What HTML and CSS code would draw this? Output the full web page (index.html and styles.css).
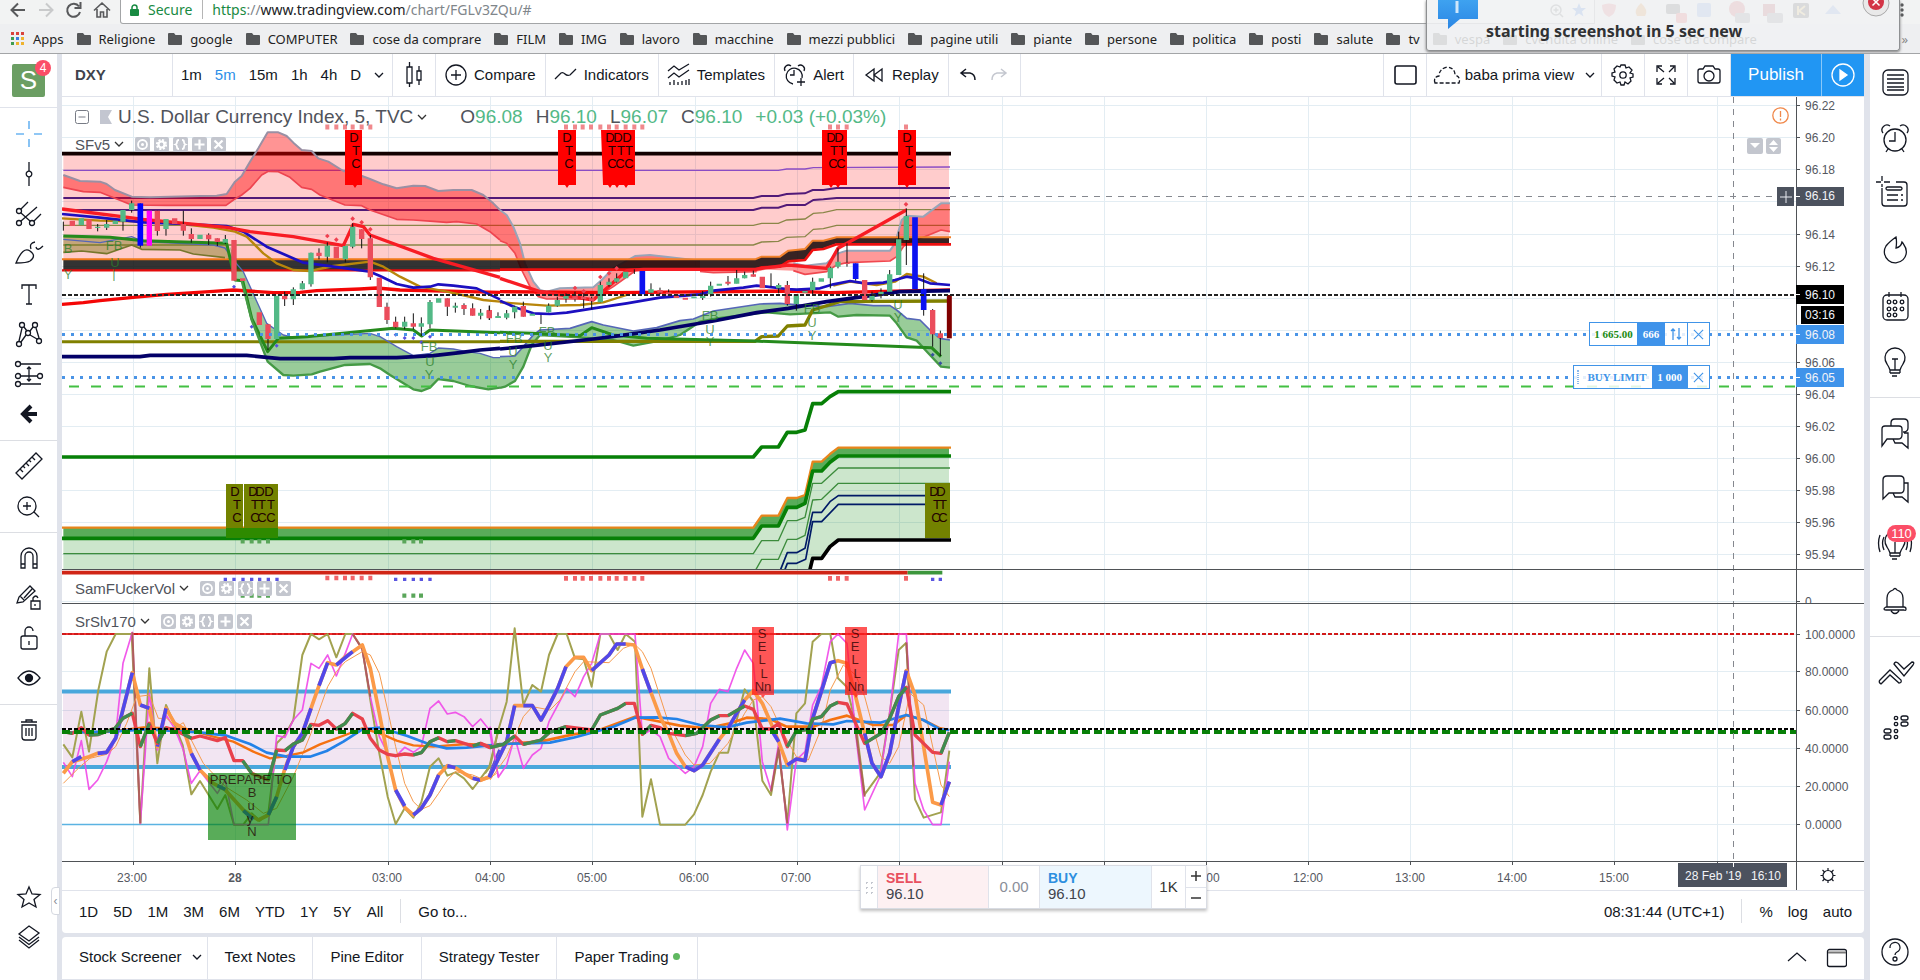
FILE: index.html
```html
<!DOCTYPE html>
<html lang="en">
<head>
<meta charset="utf-8">
<title>DXY 96.10 — TradingView</title>
<link rel="stylesheet" href="styles.css">
</head>
<body>
<svg class="defs" aria-hidden="true">
  <symbol id="folder" viewBox="0 0 14 12"><path d="M1 0h5l1.500 2H13q1 0 1 1v8q0 1-1 1H1q-1 0-1-1V1q0-1 1-1z" fill="#545658"/></symbol>
  <symbol id="chev" viewBox="0 0 10 6"><path d="M1 1l4 4 4-4" fill="none" stroke="currentColor" stroke-width="1.300"/></symbol>
  <symbol id="m-eye" viewBox="0 0 15 15"><rect width="15" height="15" rx="2" fill="#c3c6ce"/><circle cx="7.500" cy="7.500" r="4.500" fill="none" stroke="#fff" stroke-width="1.800"/><circle cx="7.500" cy="7.500" r="1.500" fill="#fff"/></symbol>
  <symbol id="m-gear" viewBox="0 0 15 15"><rect width="15" height="15" rx="2" fill="#c3c6ce"/><circle cx="7.500" cy="7.500" r="4.500" fill="none" stroke="#fff" stroke-width="2.200" stroke-dasharray="2 1.530"/><circle cx="7.500" cy="7.500" r="3" fill="none" stroke="#fff" stroke-width="2.200"/></symbol>
  <symbol id="m-code" viewBox="0 0 15 15"><rect width="15" height="15" rx="2" fill="#c3c6ce"/><path d="M6 3Q4 3 4 5t-1.500 2.500Q4 8 4 10t2 2M9 3q2 0 2 2t1.500 2.500Q11 8 11 10t-2 2" fill="none" stroke="#fff" stroke-width="1.800"/></symbol>
  <symbol id="m-plus" viewBox="0 0 15 15"><rect width="15" height="15" rx="2" fill="#c3c6ce"/><path d="M7.500 2.500v10M2.500 7.500h10" stroke="#fff" stroke-width="2.200"/></symbol>
  <symbol id="m-x" viewBox="0 0 15 15"><rect width="15" height="15" rx="2" fill="#c3c6ce"/><path d="M3.500 3.500l8 8M11.500 3.500l-8 8" stroke="#fff" stroke-width="2.200"/></symbol>
  <symbol id="cross" viewBox="0 0 12 12"><path d="M1 1l10 10M11 1L1 11" stroke="#4094e8" stroke-width="1.200"/></symbol>
</svg>

<header class="browser">
  <div class="navbar">
    <svg class="nav-icons" width="120" height="24" fill="none" stroke="#58595b" stroke-width="2">
      <path d="M25 10H12M18 3.500L11.500 10l6.500 6.500"/><path d="M39 10h13M46 3.500l6.500 6.500-6.500 6.500" stroke="#c9cacb"/><path d="M79 6.500A6.500 6.500 0 1 0 80 12M80.500 2v6h-6"/><path d="M94 10.500l8-7.500 8 7.500M97 9v8h3.500v-5h3v5h3.500V9" stroke-width="1.600"/>
    </svg>
    <div class="omnibox">
      <svg width="9" height="12" fill="#188a42"><rect y="5" width="9" height="7" rx="1"/><path d="M2 5V3.500a2.500 2.500 0 0 1 5 0V5" fill="none" stroke="#188a42" stroke-width="1.500"/></svg>
      <span class="secure">Secure</span><span class="url"><span class="scheme">https</span>://<b>www.tradingview.com</b>/chart/FGLv3ZQu/#</span>
      <span class="grow"></span>
      <svg width="42" height="16" fill="none" stroke="#6b6d70" stroke-width="1.500"><circle cx="8" cy="8" r="5"/><path d="M12 12l3 3M5.500 8h5M8 5.500v5"/><path d="M31 1l2 5h5l-4 3.500 1.500 5L31 11.500 26.500 14.500l1.500-5L24 6h5z" fill="#4a86e8" stroke="none"/></svg>
    </div>
    <svg class="ext-icons" width="325" height="24">
      <path d="M7 5q7-3 14 0 0 9-7 12-7-3-7-12z" fill="#e5737a"/><path d="M46 3q8 7 4 13h-8q-4-6 4-13z" fill="#e8903a"/><rect x="71" y="4" width="14" height="10" rx="2" fill="#555"/><rect x="81" y="13" width="11" height="10" rx="2" fill="#e55"/><rect x="102" y="3" width="14" height="14" rx="2" fill="#7ba2e2"/><circle cx="142" cy="9" r="8" fill="#d4555b"/><rect x="140" y="13" width="15" height="10" rx="2" fill="#8d8e90"/><path d="M168 4h12v12h-12z" fill="#b5454c"/><rect x="172" y="13" width="16" height="10" rx="2" fill="#8d8e90"/><rect x="198" y="3" width="16" height="15" rx="2" fill="#444"/><path d="M203 6v9M210 6l-6 5 6 4" fill="none" stroke="#eec86a" stroke-width="2"/><path d="M230 14l8-9 8 9z" fill="#7ba2e2"/>
      <g fill="#58595b"><circle cx="307" cy="5" r="1.700"/><circle cx="307" cy="10" r="1.700"/><circle cx="307" cy="15" r="1.700"/></g>
    </svg>
  </div>
  <nav class="bookmarks">
    <a href="#"><svg width="14" height="13"><path d="M0 0h3v3H0zM5 0h3v3H5zM10 0h3v3h-3z" fill="#d9433c"/><path d="M0 5h3v3H0z" fill="#3f9c4f"/><path d="M5 5h3v3H5z" fill="#3b7de0"/><path d="M10 5h3v3h-3zM5 10h3v3H5zM10 10h3v3h-3z" fill="#eeb32e"/><path d="M0 10h3v3H0z" fill="#3f9c4f"/></svg>Apps</a>
    <a href="#"><svg width="14" height="12"><use href="#folder"/></svg>Religione</a>
    <a href="#"><svg width="14" height="12"><use href="#folder"/></svg>google</a>
    <a href="#"><svg width="14" height="12"><use href="#folder"/></svg>COMPUTER</a>
    <a href="#"><svg width="14" height="12"><use href="#folder"/></svg>cose da comprare</a>
    <a href="#"><svg width="14" height="12"><use href="#folder"/></svg>FILM</a>
    <a href="#"><svg width="14" height="12"><use href="#folder"/></svg>IMG</a>
    <a href="#"><svg width="14" height="12"><use href="#folder"/></svg>lavoro</a>
    <a href="#"><svg width="14" height="12"><use href="#folder"/></svg>macchine</a>
    <a href="#"><svg width="14" height="12"><use href="#folder"/></svg>mezzi pubblici</a>
    <a href="#"><svg width="14" height="12"><use href="#folder"/></svg>pagine utili</a>
    <a href="#"><svg width="14" height="12"><use href="#folder"/></svg>piante</a>
    <a href="#"><svg width="14" height="12"><use href="#folder"/></svg>persone</a>
    <a href="#"><svg width="14" height="12"><use href="#folder"/></svg>politica</a>
    <a href="#"><svg width="14" height="12"><use href="#folder"/></svg>posti</a>
    <a href="#"><svg width="14" height="12"><use href="#folder"/></svg>salute</a>
    <a href="#"><svg width="14" height="12"><use href="#folder"/></svg>tv</a>
    <a href="#"><svg width="14" height="12"><use href="#folder"/></svg>vespa</a>
    <a href="#"><svg width="14" height="12"><use href="#folder"/></svg>cvendita online</a>
    <a href="#"><svg width="14" height="12"><use href="#folder"/></svg>cose da compare</a>
    <span class="more">»</span>
  </nav>
  <div class="toast" role="status">
    <svg class="bubble" width="40" height="30"><defs><linearGradient id="bg" x2="0" y2="1"><stop stop-color="#3ea2f0"/><stop offset="1" stop-color="#2b86e4"/></linearGradient></defs><path d="M0 0h40v19H22L10 29V19H0z" fill="url(#bg)"/><path d="M19 1v12" stroke="#cfe7fb" stroke-width="3"/></svg>
    <span>starting screenshot in 5 sec new</span>
    <svg class="close" width="28" height="18"><circle cx="14" cy="3" r="13" fill="#e9e9e9" stroke="#a9a9a9"/><circle cx="14" cy="2" r="8" fill="#d33446"/><path d="M10.500-1.500l7 7M17.500-1.500l-7 7" stroke="#fff" stroke-width="1.500"/></svg>
  </div>
</header>

<div class="app">
  <aside class="drawbar">
    <div class="logo"><span class="avatar">S</span><span class="badge">4</span></div>
    <button aria-label="Cross"><svg viewBox="-14 -14 28 28" stroke="#6cb5f2" stroke-width="1.600"><path d="M0-13v8M0 5v8M-13 0h8M5 0h8"/></svg></button>
    <button aria-label="Trend line"><svg viewBox="-14 -14 28 28"><path d="M0-12v9M0 3v9"/><circle r="2.800"/></svg></button>
    <button aria-label="Pitchfork"><svg viewBox="-14 -14 28 28"><circle cx="-10" cy="-3" r="2.500"/><circle cx="-10" cy="9" r="2.500"/><circle cx="3" cy="9" r="2.500"/><path d="M-8-5l7-7M-8-1L1 7M-8 7L8-7M5 7l7-7"/></svg></button>
    <button aria-label="Brush"><svg viewBox="-14 -14 28 28"><path d="M-13 9Q-6-8 1-3 8 2 1 7-2 9-13 9zM2-5q-2-6 4-7M7-7q1 5 7-1"/></svg></button>
    <button aria-label="Text"><svg viewBox="-14 -14 28 28"><path d="M-7-5v-4H7v4M0-9V10M-3 10h6"/></svg></button>
    <button aria-label="Patterns"><svg viewBox="-14 -14 28 28"><circle cx="-7" cy="-9" r="2.500"/><circle cx="6" cy="-9" r="2.500"/><circle cx="-1" cy="-1" r="2.500"/><circle cx="-10" cy="10" r="2.500"/><circle cx="10" cy="7" r="2.500"/><path d="M-5-7l3 4M4-7L1-3M-7-6l-3 13M7-6l3 10M-8 8l5-7M8 5L1 1"/></svg></button>
    <button aria-label="Prediction"><svg viewBox="-14 -14 28 28"><circle cx="-11" cy="-10" r="2.500"/><circle cx="-11" cy="2" r="2.500"/><circle cx="11" cy="2" r="2.500"/><circle cx="-11" cy="10" r="2.500"/><path d="M-8-10h20M-8 2H8M-8 10h20M0-7V7M-2-5l2-2 2 2M-2 5l2 2 2-2"/></svg></button>
    <button aria-label="Arrow"><svg viewBox="-14 -14 28 28" stroke-width="4"><path d="M8 0H-5M2-8l-8 8 8 8"/></svg></button>
    <hr>
    <button aria-label="Measure"><svg viewBox="-14 -14 28 28"><path d="M-13 7L7-13l6 6L-7 13zM-9 3l3 3M-6 0l2 2M-3-3l3 3M0-6l2 2M3-9l3 3"/></svg></button>
    <button aria-label="Zoom"><svg viewBox="-14 -14 28 28"><circle cx="-2" r="9"/><path d="M5 6l5 5M-6 0h8M-2-4v8"/></svg></button>
    <hr>
    <button aria-label="Magnet"><svg viewBox="-14 -14 28 28"><path d="M-8 10V-2a8 8 0 0 1 16 0v12H4V-2a4 4 0 0 0-8 0v12zM-8 6h4M4 6h4"/></svg></button>
    <button aria-label="Stay in drawing mode"><svg viewBox="-14 -14 28 28"><path d="M-12 5l2-6L1-12l5 5L-6 4zM-9-2l4 4M2 3h9v8H2zM4 3V0q3-4 5 0M6 6v2M-5 0L3-9"/></svg></button>
    <button aria-label="Lock"><svg viewBox="-14 -14 28 28"><rect x="-8" y="-2" width="16" height="13" rx="2"/><path d="M-4-2v-5a4 4 0 0 1 8 0M0 3v4"/></svg></button>
    <button aria-label="Hide drawings"><svg viewBox="-14 -14 28 28"><path d="M-11 0q11-14 22 0-11 14-22 0z"/><circle r="3.500" fill="#131722"/></svg></button>
    <hr>
    <button aria-label="Remove"><svg viewBox="-14 -14 28 28"><path d="M-8-8H8M-3-8v-2h6v2M-7-5V7q0 3 3 3h8q3 0 3-3V-5zM-3-2v8M0-2v8M3-2v8"/></svg></button>
    <div class="bar-end">
      <button aria-label="Favorites"><svg viewBox="-14 -14 28 28"><path d="M0-10l3 7 8 .500-6 5 2 7.500-7-4-7 4 2-7.500-6-5 8-.500z"/></svg></button>
      <button aria-label="Object tree"><svg viewBox="-14 -14 28 28"><path d="M0-11l10 7L0 4l-10-7zM-10 0L0 7.500 10 0M-10 3L0 11 10 3"/></svg></button>
    </div>
    <button class="handle" aria-label="Hide toolbar">‹</button>
  </aside>

  <main class="center">
    <div class="topbar">
      <button class="symbol">DXY</button>
      <div class="times"><button>1m</button><button class="on">5m</button><button>15m</button><button>1h</button><button>4h</button><button>D</button><button aria-label="Intervals"><svg width="10" height="6"><use href="#chev"/></svg></button></div>
      <button class="sq" aria-label="Candles"><svg viewBox="-14 -14 28 28"><path d="M-7-8h5V8h-5zM-4.500-13v5M-4.500 8v4M3-4h4V5H3zM5-9v5M5 5v5"/></svg></button>
      <button class="wide"><svg viewBox="-11 -11 22 22"><circle r="10"/><path d="M-5 0H5M0-5V5"/></svg>Compare</button>
      <button class="wide"><svg viewBox="-11 -11 22 22"><path d="M-11 4l6-6q2-1 4 1t5 1l6-6"/></svg>Indicators</button>
      <button class="wide"><svg viewBox="-11 -11 22 22"><path d="M-11-4l6-5 5 4 10-6M-11 3l6-5 5 4 10-7M-9 7v3M-5 5v5M-1 7v3M3 6v4M7 5v5M10 4v6"/></svg>Templates</button>
      <button class="wide"><svg viewBox="-11 -11 22 22"><path d="M-2 9A8 8 0 1 1 7 3M-1-5v5h-4M-10-4a4 4 0 0 1 6-5M3-9a4 4 0 0 1 6 5M6 3v8M2 7h8"/></svg>Alert</button>
      <button class="wide"><svg viewBox="-11 -11 22 22"><path d="M0-6v12l-8-6zM8-6v12L0 0z"/></svg>Replay</button>
      <div class="undo"><button aria-label="Undo"><svg viewBox="-11 -11 22 22"><path d="M-2-6l-5 4 5 4M-7-2H2q5 1 5 7" stroke-width="1.500"/></svg></button><button aria-label="Redo"><svg viewBox="-11 -11 22 22" stroke="#c4c7cf"><path d="M2-6l5 4-5 4M7-2H-2q-5 1-5 7" stroke-width="1.500"/></svg></button></div>
      <span class="grow"></span>
      <button class="sq lead" aria-label="Layout"><svg viewBox="-14 -14 28 28"><rect x="-10" y="-9" width="21" height="18" rx="2" stroke-width="1.600"/></svg></button>
      <button class="view"><svg viewBox="-14 -14 28 28"><path d="M-12 8q-2-6 4-7 0-7 8-9 8 1 8 8 6 2 4 8z" stroke-dasharray="4 2"/></svg>baba prima view<svg class="dn"><use href="#chev"/></svg></button>
      <button class="sq" aria-label="Settings"><svg viewBox="-14 -14 28 28"><circle r="3.200"/><path d="M-2-10h4l1 3 3-1 3 3-2 3 3 1v3l-3 1 1 3-3 3-3-2-1 3h-3l-1-3-3 1-3-3 1-3-3-1v-3l3-1-1-3 3-3 3 1z"/></svg></button>
      <button class="sq" aria-label="Fullscreen"><svg viewBox="-14 -14 28 28"><path d="M-9-3v-6h5M-8-8l6 5M9-3v-6H4M8-8L3-3M-9 3v6h5M-8 8l6-5M9 3v6H4M8 8L3 3"/></svg></button>
      <button class="sq" aria-label="Snapshot"><svg viewBox="-14 -14 28 28"><path d="M-9-6h3l2-3h8l2 3h3q2 0 2 2V6q0 2-2 2H-9q-2 0-2-2V-4q0-2 2-2z"/><circle cy="1" r="5"/></svg></button>
      <button class="publish">Publish</button>
      <button class="play" aria-label="Play"><svg viewBox="-14 -14 28 28" stroke="#fff"><circle r="11"/><path d="M-3-5l7 5-7 5z" fill="#fff"/></svg></button>
    </div>

    <div class="chart">
      <div class="plot">
        <svg class="canvas"><g transform="translate(-62 -97)">
          <path class="grid" d="M62 105.500h3000M62 137.500h3000M62 169.500h3000M62 201.500h3000M62 234.500h3000M62 266.500h3000M62 298.500h3000M62 330.500h3000M62 362.500h3000M62 394.500h3000M62 426.500h3000M62 458.500h3000M62 490.500h3000M62 522.500h3000M62 554.500h3000M62 601.500h3000M62 634.500h3000M62 671.500h3000M62 710.500h3000M62 748.500h3000M62 786.500h3000M62 824.500h3000"/>
          <path class="grid" d="M133.500 97v764M235.500 97v764M388.500 97v764M490.500 97v764M592.500 97v764M695.500 97v764M797.500 97v764M899.500 97v764M1002.500 97v764M1104.500 97v764M1206.500 97v764M1308.500 97v764M1410.500 97v764M1512.500 97v764M1614.500 97v764M1717.500 97v764"/>

          <g transform="translate(480 100) scale(.33333)" fill="none">
            <path d="M-1250 165H1407V412H1070l-40 10h-32l-23 25-50 5-25 18h-55l-20 8H-1250z" fill="#f00" fill-opacity=".2"/>
            <path d="M-1250 211H895l25-4h55l25-4 410-2" stroke="#8a4cc4" stroke-width="4"/>
            <path d="M-1250 294H820l25-6h50l25-6 55-2 23-10h32l40-6h340M-1250 330H820l25-7h50l25-8h55l25-15 30-2 40-4h340" stroke="#511a78" stroke-width="6"/>
            <path d="M-1250 376H820l25-6h50l25-10 55-3 25-17 30-2 40-9h340M-1250 435H820l25-9 50-2 25-12 55-2 25-22 30-2 40-10h340" stroke="#8b8648" stroke-width="4"/>
            <path d="M-1254 161H1413" stroke="#120000" stroke-width="11"/>
          </g>

          <g transform="translate(0 90) scale(.33333)" fill="none" stroke-linejoin="round">
            <path d="M190 255L240 273 300 275 320 282 345 300 395 320 450 322 600 318 650 317 680 312 705 275 725 258 750 215 775 175 803 127 835 127 860 138 880 158 905 180 935 183 955 205 985 215 1030 243 1070 252 1110 267 1150 283 1190 295 1240 287 1275 288 1315 303 1360 300 1415 300 1450 315 1480 340 1500 360V450L1470 425 1430 402 1370 395 1340 397 1300 394 1240 390 1190 388 1110 360 1085 347 1035 345 960 315 935 298 905 292 870 262 835 245 805 244 785 255 750 295 725 315 700 330 678 346 500 346 395 345 345 325 300 307 250 305 190 292z" fill="#f00" fill-opacity=".42"/>
            <path d="M190 255L240 273 300 275 320 282 345 300 395 320 450 322 600 318 650 317 680 312 705 275 725 258 750 215 775 175 803 127 835 127 860 138 880 158 905 180 935 183 955 205 985 215 1030 243 1070 252 1110 267 1150 283 1190 295 1240 287 1275 288 1315 303 1360 300 1415 300 1450 315 1480 340 1500 360" stroke="#9a90a4" stroke-width="6"/>
            <path d="M190 292L250 305 300 307 345 325 395 345 500 346 678 346 700 330 725 315 750 295 785 255 805 244 835 245 870 262 905 292 935 298 960 315 1035 345 1085 347 1110 360 1190 388 1240 390 1300 394 1340 397 1370 395 1430 402 1470 425 1500 450" stroke="#ee4450" stroke-width="5"/>
            <path d="M190 508H1500V541H190z" fill="#000" fill-opacity=".8"/><path d="M186 508H1500" stroke="#f07818" stroke-width="6"/><path d="M186 541H1500" stroke="#e50b0b" stroke-width="7"/>
            <path d="M190 438L330 442 380 445 430 452 680 460 700 510 675 503 580 492 540 480 425 478 395 465 320 491 245 483 190 487z" fill="#6b6b00" fill-opacity=".4"/>
            <path d="M690 470L730 545 800 700 850 735 880 742 1110 730 1140 740 1190 770 1240 797 1290 790 1315 774 1360 777 1400 785 1440 790 1480 803 1500 803V893L1465 898 1410 888 1360 873 1315 867 1290 893 1265 903 1240 898 1170 855 1140 835 1110 822 1035 825 960 845 935 853 880 857 850 855 803 815 755 685 725 572 705 570z" fill="#008000" fill-opacity=".4"/>
            <path d="M186 755H1500" stroke="#808000" stroke-width="9"/>
            <path d="M190 448L300 458 395 440 430 455 640 465 675 474 700 510 730 545 800 700 850 735 880 742 1110 730 1140 740 1190 770 1240 797 1290 790 1315 774 1360 777 1400 785 1440 790 1480 803 1500 803" stroke="#5566b8" stroke-width="4"/>
            <path d="M186 643L250 638 300 632 400 622 500 613 640 604 700 600 820 608 900 607 950 602 1080 597 1130 594 1200 600 1500 607" stroke="#f40606" stroke-width="10"/>
            <path d="M186 385L300 392 430 395 550 403 640 413 705 425 740 440 790 490 830 520 880 540 930 543 1000 528 1110 515 1150 530 1200 560 1260 590 1340 605 1400 618 1450 630 1500 635" stroke="#b8860b" stroke-width="7"/>
            <path d="M186 372L300 383 430 397 560 402 680 408 730 425 800 470 850 492 910 518 1000 530 1110 545 1140 558 1190 582 1240 593 1290 590 1315 583 1360 587 1430 595 1500 628" stroke="#1c0fc0" stroke-width="8"/>
            <path d="M186 357L430 388 680 412 750 425 880 440 1030 467 1060 403 1090 410 1110 435 1300 505 1500 562" stroke="#f81c24" stroke-width="10"/>
            <path d="M190 438L330 442 430 452 680 460 705 570 728 572 755 685 803 785 835 745 920 740 1180 715 1240 720 1265 738 1290 720 1500 728" stroke="#258a1c" stroke-width="9"/>
            <path d="M190 487L245 483 320 491 395 465 425 478 540 480 580 492 675 503" stroke="#76762c" stroke-width="5"/>
            <path d="M725 572L755 690 803 815 850 855 880 857 935 853 960 845 1035 825 1110 822 1140 835 1170 855 1240 898 1265 903 1290 893 1315 867 1360 873 1410 888 1465 898 1500 893" stroke="#459a45" stroke-width="7"/>
            <path d="M186 800L420 800 450 796 740 796 800 802 840 806 1000 806 1050 803 1190 803 1300 797 1380 788 1440 780 1500 775" stroke="#030068" stroke-width="11"/>
            <path d="M190 395v27M293 402v22M320 390v30M369 360v62M395 332v36M421 340v133M472 362v75M498 387v50M550 362v75M574 415v43M626 430v35M652 445v23M676 435v27M804 703v77M854 605v43M880 592v53M907 573v25M933 488v102M957 475v33M982 457v60M1036 468v49M1058 400v75M1085 418v57M1111 435v135M1161 638v64M1187 680v35M1214 680v38M1240 670v48M1264 682v56M1290 630v85M1342 625v53M1366 638v30M1392 640v35M1418 640v37M1442 657v31M1468 647v43" stroke="#111" stroke-width="3"/>
            <path d="M244 385v20M293 410v4M320 402v11M346 392v10M369 360v35M395 340v20M498 387v30M600 434v13M676 447v11M830 617v130M880 598v30M907 580v18M933 488v95M982 467v33M1036 468v40M1058 410v60M1214 695v15M1264 700v10M1290 636v67M1316 625v13M1366 647v6M1442 668v9M1495 680v4" stroke="#53b987" stroke-width="16"/>
            <path d="M217 392v16M267 388v29M472 362v61M524 385v17M550 402v20M574 432v15M626 434v14M652 445v11M702 450v122M728 565v8M778 667v38M804 703v44M854 617v11M957 488v10M1009 470v35M1085 418v29M1111 445v117M1138 563v88M1161 650v40M1187 695v17M1240 700v10M1342 625v25M1392 645v12M1418 655v22M1468 660v23" stroke="#eb4d5c" stroke-width="16"/>
            <path d="M421 340v127" stroke="#00f" stroke-width="17"/><path d="M448 362v105" stroke="#f0f" stroke-width="16"/>
            <path d="M702 584l6 6-6 6-6-6zM755 704l6 6-6 6-6-6zM830 761l6 6-6 6-6-6zM1187 728l6 6-6 6-6-6zM1214 738l6 6-6 6-6-6zM1240 738l6 6-6 6-6-6zM1264 751l6 6-6 6-6-6zM1290 734l6 6-6 6-6-6z" fill="#554fe0"/>
            <path d="M982 431l7 7-7 7-7-7zM1009 442l7 7-7 7-7-7zM1058 379l7 7-7 7-7-7zM1085 390l7 7-7 7-7-7zM1111 411l7 7-7 7-7-7z" fill="#f04050"/>
            <path d="M976 111h12M1003 111h12M1029 111h12M1052 111h12M1079 111h12M1105 111h12" stroke="#f0888c" stroke-width="15"/>
          </g>

          <g transform="translate(480 100) scale(.33333)" fill="none" stroke-linejoin="round">
            <path d="M60 330L80 345 100 380 120 430 135 490 160 545 180 570 200 575 240 565 340 562 365 540 400 505 465 468 510 465 570 472 660 482V512H465L400 560 340 597 200 597 175 590 150 560 125 510 105 460 80 430 60 422z" fill="#f00" fill-opacity=".42"/>
            <path d="M660 512L700 518 830 515 900 500 940 490 975 497 1040 490 1074 460 1100 452 1230 452 1245 430 1265 360 1280 347 1330 350 1350 335 1383 310 1410 310V395L1383 390 1330 412 1290 425 1270 440 1250 470 1230 483 1100 488 1070 495 1040 515 975 523 940 512 830 508z" fill="#f00" fill-opacity=".4"/>
            <path d="M60 330L80 345 100 380 120 430 135 490 160 545 180 570 200 575 240 565 340 562 365 540 400 505 465 468 510 465 570 472 660 482M940 490L975 497 1040 490 1074 460 1100 452 1230 452 1245 430 1265 360 1280 347 1330 350 1350 335 1383 310 1410 310" stroke="#98a4b8" stroke-width="6"/>
            <path d="M60 422L80 430 105 460 125 510 150 560 175 590 200 597 340 597 400 560 465 513M660 514L700 518 830 515M940 512L975 523 1040 515 1070 495 1100 488 1230 483 1250 470 1270 440 1290 425 1330 412 1383 390 1410 395" stroke="#f04850" stroke-width="5"/>
            <path d="M60 478H825l20-8h55l25-18 50-5 23-25h32l40-10h337v18H1070l-40 15-32 3-23 30-50 4-25 16-55 2-20 7H60z" fill="#1c0404" fill-opacity=".88"/>
            <path d="M60 478H825l20-8h55l25-18 50-5 23-25h32l40-10h343" stroke="#f0802a" stroke-width="6"/>
            <path d="M60 509H825l20-7 55-2 25-16 50-4 23-30 32-3 40-14h343" stroke="#ee1010" stroke-width="8"/>
            <path d="M60 770L105 768 130 740 160 705 180 690 270 685 335 665 370 675 460 693 530 683 600 662 640 657 700 633 840 612 900 610 980 617 1040 620 1110 610 1180 617 1230 617 1250 630 1280 655 1320 660 1350 690 1380 715 1410 720V803L1383 800 1350 765 1310 722 1280 712 1250 670 1230 647 1130 645 1075 650 1050 637 930 643 860 637 710 655 660 665 600 705 540 722 460 737 400 720 300 712 180 705 155 735 130 800 105 843 75 860 60 864z" fill="#008000" fill-opacity=".4"/>
            <path d="M60 770L105 768 130 740 160 705 180 690 270 685 335 665 370 675 460 693 530 683 600 662 640 657 700 633 840 612 900 610 980 617 1040 620 1110 610 1180 617 1230 617 1250 630 1280 655 1320 660 1350 690 1380 715 1410 720" stroke="#5566b8" stroke-width="5"/>
            <path d="M60 864L75 860 105 843 130 800 155 735 180 705 300 712 400 720 460 737 540 722 600 705 660 665 710 655 860 637 930 643 1050 637 1075 650 1130 645 1230 647 1250 670 1280 712 1310 722 1350 765 1383 800 1410 803" stroke="#459a45" stroke-width="7"/>
            <path d="M60 724H825l20-14 50-2 27-30 53-3 23-45 82-25 327-2" stroke="#808000" stroke-width="10"/>
            <path d="M60 575L400 578 925 573 1050 578 1410 570" stroke="#f40606" stroke-width="10"/>
            <path d="M60 607L105 610 200 617 300 615 370 607 440 585M1060 557L1110 545 1190 555 1245 545 1280 522 1330 530 1370 550" stroke="#b8860b" stroke-width="7"/>
            <path d="M60 602L105 622 160 640 210 642 260 638 340 625 440 610 540 593 660 583 700 572 790 563 830 557 860 560 920 567 950 569 1020 565 1060 553 1110 543 1160 551 1210 548 1245 540 1280 530 1310 535 1350 550 1410 555" stroke="#1c0fc0" stroke-width="8"/>
            <path d="M60 535L180 575 340 600 440 512 490 508 825 508 925 495 1040 505 1074 445 1101 430 1279 330" stroke="#f81c24" stroke-width="10"/>
            <path d="M60 697L160 700 300 707 335 683 400 705 500 715 820 723 1355 743 1383 770" stroke="#258a1c" stroke-width="9"/>
            <path d="M60 747L160 737 340 717 420 707 540 690 700 663 830 638 925 625 1040 605 1150 590 1260 575 1410 572" stroke="#030068" stroke-width="11"/>
            <path d="M28 617v43M54 637v17M80 630v28M104 617v38M130 605v45M183 645v27M206 610v27M232 590v30M258 580v28M285 575v30M311 570v55M335 590v38M361 545v62M387 535v25M410 520v28M463 508v14M513 550v30M540 563v20M566 568v20M668 573v27M692 545v45M744 528v28M770 510v40M794 515v20M820 512v18M873 520v40M896 550v30M922 543v74M949 583v49M998 533v50M1051 500v65M1074 445v60M1101 430v70M1127 490v52M1176 575v30M1203 565v30M1229 510v65M1256 395v130M1279 325v170M1331 520v127M1358 627v113M1381 692v76" stroke="#111" stroke-width="3"/>
            <path d="M54 648v6M80 640v13M104 620v17M157 641v6M206 617v20M232 600v17M258 588v8M361 555v52M387 545v10M410 535v10M437 515v20M513 568v10M642 590v5M668 588v6M692 557v26M718 551v6M770 535v16M794 525v10M896 555v10M949 583v29M975 573v5M998 545v25M1024 535v10M1051 503v32M1074 485v15M1176 588v12M1203 575v8M1229 523v52M1256 418v107M1279 348v72" stroke="#53b987" stroke-width="16"/>
            <path d="M28 632v23M130 618v32M285 588v10M311 590v8M335 595v8M540 570v8M566 577v6M589 588v6M616 593v6M744 545v6M820 523v7M847 530v35M922 555v57M1154 540v60M1358 630v73M1381 700v14M1101 488v4" stroke="#eb4d5c" stroke-width="16"/>
            <path d="M487 513v70M1127 490v47M1305 352v215M1331 567v63" stroke="#0b12f0" stroke-width="17"/><path d="M1408 585v130" stroke="#800000" stroke-width="15"/>
            <path d="M361 524l7 7-7 7-7-7zM387 513l7 7-7 7-7-7zM410 498l7 7-7 7-7-7zM1278 306l7 7-7 7-7-7zM285 557l7 7-7 7-7-7zM311 567l7 7-7 7-7-7z" fill="#f04050"/>
            <path d="M1358 758l6 6-6 6-6-6zM1381 784l6 6-6 6-6-6z" fill="#3850a0"/>
            <path d="M252 81h12M279 81h12M302 81h12M327 81h12M355 81h12M381 81h12M404 81h12M431 81h12M457 81h12M481 81h12M1044 81h12M1068 81h12M1094 81h12M1272 81h12" stroke="#f0888c" stroke-width="15"/>
          </g>

          <g class="buy">
            <text x="68" y="253">B</text><text x="68" y="279">Y</text><text x="114" y="250">FB</text><text x="115" y="267">U</text><text x="114" y="278">|</text>
            <text x="429" y="351">FB</text><text x="430" y="366">U</text><text x="429" y="379">Y</text>
            <text x="514" y="343">FB</text><text x="513" y="356">U</text><text x="513" y="369">Y</text>
            <text x="547" y="336">FB</text><text x="548" y="350">U</text><text x="548" y="362">Y</text>
            <text x="710" y="320">FB</text><text x="710" y="334">U</text><text x="710" y="346">Y</text>
            <text x="812" y="313">FB</text><text x="812" y="327">U</text><text x="812" y="340">Y</text>
            <text x="898" y="309">U</text><text x="898" y="322">Y</text>
          </g>

          <g transform="translate(480 380) scale(.33333)" fill="none" stroke-linejoin="round">
            <path d="M-1250 475H820l25-37h50l27-56h28l25-12 23-97h27l25-26 25-19h332V480H1075l-25 20-25 35h-27l-8 33H-1250z" fill="#008000" fill-opacity=".2"/>
            <path d="M-1250 443H820l25-36h50l27-53h28l25-9 23-100h27l25-23 25-19h332v25H1075l-25 19-25 26h-27l-23 97-25 12h-28l-27 56h-50l-25 37H-1250z" fill="#008000" fill-opacity=".65"/>
            <path d="M-1254 443H820l25-36h50l27-53h28l25-9 23-100h27l25-23 25-19h338" stroke="#e8851c" stroke-width="7"/>
            <path d="M-1254 475H820l25-37h50l27-56h28l25-12 23-97h27l25-26 25-19h338M-1254 231H820l25-30h50l27-44h28l25-7 23-79h27l25-21 25-15h338" stroke="#078007" stroke-width="11"/>
            <path d="M-1250 521H820l25-39h50l27-60h28l25-10 23-102h27l50-46h335M828 568l17-30h50l27-60h28l25-12 23-106 27-2 50-48h335" stroke="#3c8c3c" stroke-width="4"/>
            <path d="M902 568l20-50h28l25-13 23-108h27l25-32 25-18h335M915 568l7-18h28l27-12 21-113h27l50-52h335" stroke="#001a66" stroke-width="5"/>
            <path d="M990 568l8-33h27l25-35 25-20h338" stroke="#000" stroke-width="11"/>
            <path d="M-1254 578H1283" stroke="#d02516" stroke-width="11"/><path d="M1283 578H1387" stroke="#3c963c" stroke-width="11"/>
            <path d="M252 595h12M279 595h12M302 595h12M327 595h12M355 595h12M381 595h12M404 595h12M431 595h12M457 595h12M481 595h12M1044 595h12M1068 595h12M1094 595h12M1272 595h12M-464 594h12M-437 594h12M-411 594h12M-388 594h12M-361 594h12M-335 594h12" stroke="#f26468" stroke-width="14"/>
            <path d="M-769 598h10M-743 598h10M-716 598h10M-690 598h10M-666 598h10M-640 598h10M-614 598h10M-258 598h10M-231 598h10M-205 598h10M-181 598h10M-155 598h10M1353 598h10M1376 598h10" stroke="#5a55e0" stroke-width="10"/>
            <path d="M-718 647h12M-691 647h12M-668 647h12M-642 647h12M-233 647h12M-206 647h12M-183 647h12M-718 484h12M-691 484h12M-668 484h12M-642 484h12M-233 484h12M-206 484h12M-183 484h12" stroke="#5aa65a" stroke-width="13"/>
          </g>

          <path d="M62 295h3000" stroke="#222" stroke-width="2" stroke-dasharray="4 2"/>
          <path d="M62 334.500h3000M62 377.500h3000" stroke="#4a94e6" stroke-width="3" stroke-dasharray="3 6"/>
          <path d="M69 386.500h3000" stroke="#43c043" stroke-width="2" stroke-dasharray="10 12"/>

          <path d="M345 130h17v55h-5l-2 3-2-3h-8zM558 130h18v55h-7l-2 3-2-3h-7zM601 130h34v55h-7l-2 3-2-3h-5l-2 3-2-3h-3l-2 3-2-3h-5zM822 130h25v55h-7l-2 3-2-3h-3l-2 3-2-3h-7zM898 130h18v55h-7l-2 3-2-3h-7z" fill="#f00"/>
          <path d="M226 484h17v54h-17zM244 484h34v54h-34zM925 483h25v55h-25z" fill="#738200"/><path d="M226 528h52v10h-52z" fill="#2e8a00"/>
          <g class="tag">
            <text x="354" y="142">D</text><text x="356" y="155">T</text><text x="356" y="168">C</text>
            <text x="567" y="142">D</text><text x="569" y="155">T</text><text x="569" y="168">C</text>
            <text x="610" y="142">D</text><text x="618" y="142">D</text><text x="627" y="142">D</text><text x="612" y="155">T</text><text x="621" y="155">T</text><text x="629" y="155">T</text><text x="612" y="168">C</text><text x="620" y="168">C</text><text x="629" y="168">C</text>
            <text x="831" y="142">D</text><text x="839" y="142">D</text><text x="834" y="155">T</text><text x="842" y="155">T</text><text x="833" y="168">C</text><text x="841" y="168">C</text>
            <text x="907" y="142">D</text><text x="909" y="155">T</text><text x="909" y="168">C</text>
            <text x="235" y="496">D</text><text x="237" y="509">T</text><text x="237" y="522">C</text>
            <text x="253" y="496">D</text><text x="260" y="496">D</text><text x="269" y="496">D</text><text x="255" y="509">T</text><text x="262" y="509">T</text><text x="271" y="509">T</text><text x="255" y="522">C</text><text x="262" y="522">C</text><text x="271" y="522">C</text>
            <text x="934" y="496">D</text><text x="941" y="496">D</text><text x="937" y="509">T</text><text x="943" y="509">T</text><text x="936" y="522">C</text><text x="943" y="522">C</text>
          </g>

          <path d="M63 692h886v75H63z" fill="#800080" fill-opacity=".1"/>
          <path d="M62 691.500h889M62 767h889" stroke="#49a7dc" stroke-width="4"/><path d="M62 824.500h888" stroke="#5bb3e2" stroke-width="1.500"/>
          <path d="M62 634h888" stroke="#f03030" stroke-width="2"/><path d="M62 634h3000" stroke="#d01a1a" stroke-width="2" stroke-dasharray="4 2"/>
          <g transform="translate(0 600) scale(.33333)" fill="none" stroke-linejoin="round">
            <path d="M190 433L217 472 244 335 267 455 295 270 320 155 347 102 395 102 421 670 448 205 472 490 498 315 520 365 548 435 574 583 600 543 652 627 676 585 702 674 730 674 755 640 779 662 805 640 830 430 855 405 880 360 907 165 933 102 957 118 983 102 1009 172 1036 102 1058 102 1087 145 1111 300 1138 460 1163 590 1187 672 1214 625 1240 653 1264 607 1290 500 1316 475 1342 527 1366 517 1392 535 1418 567 1442 535 1468 500 1495 390" stroke="#a2a250" stroke-width="6"/>
            <path d="M190 487L217 530 244 422 267 568 293 540 320 485 346 415 369 190 397 97 421 670 448 280 472 450 498 345 524 385 550 450 574 550 600 512 652 580 676 540 702 674 805 674 830 407 855 412 880 360 907 330 933 190 957 205 983 165 1009 228 1036 160 1058 102 1087 148 1111 290 1138 410 1163 460 1187 470 1214 442 1240 457 1264 440 1290 325 1316 303 1342 342 1366 337 1392 350 1418 380 1442 357 1468 390 1495 530" stroke="#f048e8" stroke-opacity=".9" stroke-width="5"/>
            <path d="M397 97L421 670M1058 102L1087 148 1111 290" stroke="#ad6058" stroke-width="6"/>
            <path d="M190 550L240 500 270 475 320 463 347 440 380 370 410 290 448 285 475 355 500 355 530 380 550 368 574 420 610 490 676 560 740 600 790 640 830 625 880 530 933 400 983 260 1009 215 1036 185 1087 155 1111 165 1138 220 1163 330 1187 440 1214 550 1240 605 1264 628 1290 617 1316 580 1342 540 1366 515 1418 525 1442 535 1468 535 1490 520" stroke="#f59a4c" stroke-width="3"/>
            <path d="M190 398L330 395 430 382 560 387 640 410 700 425 760 455 810 475 860 468 910 457 960 433 1036 405 1087 385 1140 400 1190 422 1240 436 1300 440 1400 432 1500 437" stroke="#f57212" stroke-width="7"/>
            <path d="M190 398L330 395 440 388 600 397 680 407 750 432 800 458 860 470 930 470 980 453 1030 425 1087 388 1140 383 1220 407 1280 430 1340 445 1400 443 1500 433" stroke="#2382e8" stroke-width="8"/>
            <path d="M190 520L217 485 267 470 293 460 320 457 347 415 397 218 421 315 448 325 472 440 498 325 524 370 550 385 574 460 600 510 640 550 676 570 730 630 775 660 805 645 830 590 855 505 880 440 907 400 933 325 957 257 983 188 1009 195 1036 170 1058 155 1087 135 1111 205 1138 340 1163 470 1187 570 1214 622 1240 645 1264 625 1290 585 1316 525 1342 497 1366 503 1392 520 1418 535 1442 541 1468 530 1500 450" stroke="#fb9a48" stroke-width="11"/>
            <path d="M217 485L244 470M293 460L320 457 347 415 397 218M421 315L448 325M472 440L498 325M574 460L600 510M652 557L676 568M730 632L760 658M805 645L830 590M855 510L880 440 907 400 933 325M957 257L983 188M1009 195L1058 155M1187 570L1214 618M1240 645L1264 625 1290 585 1316 525M1342 497L1366 503M1418 535L1442 541M1468 530L1500 450" stroke="#5148ea" stroke-width="11"/>
            <path d="M190 395L217 400 244 383 267 405 293 404 330 390 345 385 369 355 397 340 421 440 448 370 472 430 498 383 524 390 574 415 600 408 652 422 676 413 702 482 728 482 755 520 805 540 830 450 855 452 880 432 907 420 933 373 957 376 983 362 1009 387 1036 370 1058 340 1087 357 1111 415 1138 450 1163 463 1187 467 1214 462 1240 465 1264 458 1290 425 1316 413 1342 425 1366 422 1418 438 1442 430 1468 441 1500 433" stroke="#e8414c" stroke-width="10"/>
            <path d="M190 395L217 400M267 405L293 404 330 390 345 385 369 355 397 340M421 440L448 370M472 430L498 383M550 402L574 415M728 482L755 520M805 540L830 450M855 452L880 432 907 420 933 373M1009 387L1036 370 1058 340M1240 465L1264 458 1290 425 1316 413M1342 425L1366 422M1418 438L1442 430M1468 441L1500 433" stroke="#3f8c50" stroke-width="10"/>
          </g>
          <g transform="translate(480 600) scale(.33333)" fill="none" stroke-linejoin="round">
            <path d="M15 520L30 500 55 390 80 305 104 85 130 315 157 255 183 275 207 165 233 102 260 102 285 175 311 178 335 260 361 102 387 102 413 150 437 102 465 125 487 650 513 538 540 674 616 674 642 643 668 585 692 515 718 458 744 458 770 360 794 268 820 305 847 542 873 585 896 450 922 670 949 340 975 310 998 125 1024 102 1051 102 1074 235 1100 260 1127 370 1154 583 1200 520 1229 340 1256 150 1279 128 1305 598 1331 653 1383 637 1408 452" stroke="#a2a250" stroke-width="6"/>
            <path d="M30 380L55 532 80 495 104 410 130 505 157 465 183 445 207 365 260 265 285 290 311 230 335 190 361 102 465 102 487 405 513 390 540 410 566 475 616 520 642 500 668 440 692 310 718 268 744 275 770 205 794 150 820 190 847 485 873 570 896 430 922 690 949 480 975 455 998 315 1024 260 1051 125 1074 102 1101 130 1127 400 1154 630 1200 530 1229 340 1256 102 1279 102 1305 550 1331 630 1358 674 1383 674 1408 485" stroke="#f048e8" stroke-opacity=".9" stroke-width="5"/>
            <path d="M873 575L896 445 922 670M1127 390L1154 590M1279 128L1300 500" stroke="#ad6058" stroke-width="6"/>
            <path d="M30 540L80 470 130 350 157 320 210 330 240 300 285 215 311 185 387 188 430 145 463 132 487 155 513 205 566 370 616 465 642 495 690 490 744 430 794 340 820 300 847 290 873 320 910 400 949 470 985 480 1024 385 1051 270 1090 195 1127 225 1154 290 1203 470 1229 490 1256 440 1290 280 1331 315 1383 555 1408 590" stroke="#f59a4c" stroke-width="3"/>
            <path d="M60 435L100 430 180 425 280 403 350 393 465 350 530 363 600 377 680 385 750 370 800 353 870 357 920 380 1000 380 1050 360 1101 347 1180 375 1240 375 1279 345 1330 360 1380 385 1408 390" stroke="#f57212" stroke-width="8"/>
            <path d="M60 432L130 430 210 428 280 413 335 398 400 380 465 353 530 352 590 357 660 375 740 382 800 368 900 356 980 370 1060 373 1101 363 1200 368 1279 345 1330 360 1380 388 1408 390" stroke="#2382e8" stroke-width="8"/>
            <path d="M0 540L28 532 80 425 104 317 157 317 183 360 207 317 233 265 258 200 285 172 311 172 335 212 387 165 410 132 437 132 463 135 487 207 513 278 540 350 566 400 590 460 616 500 642 512 668 495 718 418 744 385 770 340 794 300 820 272 847 310 873 370 896 425 922 495 949 477 975 482 998 355 1024 275 1051 188 1074 182 1101 190 1127 290 1154 400 1176 490 1203 530 1229 460 1256 320 1279 212 1305 285 1331 440 1358 607 1383 615 1408 545" stroke="#fb9a48" stroke-width="11"/>
            <path d="M28 532L80 425 104 317M130 317L157 317 183 360 207 317 233 265 258 200M335 212L387 165 410 132 437 132M487 207L513 278M616 500L642 512 668 495 718 418M744 385L770 340 794 300M880 400L896 425M922 495L949 477 975 482 998 355 1024 275 1051 188 1067 184M1154 400L1176 490 1203 530 1229 460 1256 320 1279 212M1383 615L1408 545" stroke="#5148ea" stroke-width="11"/>
            <path d="M0 430L30 443 70 433 104 408 130 433 183 420 207 398 258 380 335 390 361 345 413 325 437 310 463 310 487 403 513 376 540 383 566 400 616 407 650 400 692 360 718 347 744 347 794 318 820 328 847 387 873 387 896 370 922 440 949 393 985 388 998 357 1024 350 1051 318 1074 307 1101 312 1127 370 1154 430 1203 400 1229 355 1256 290 1279 262 1305 405 1358 457 1383 460 1408 397" stroke="#e8414c" stroke-width="10"/>
            <path d="M30 443L70 433 104 408M130 433L183 420 207 398 258 380M335 390L361 345 413 325 437 310M487 403L513 376M616 407L650 400 692 360 718 347M744 347L794 318M922 440L949 393 985 388 998 357 1024 350 1051 318 1074 307M1154 430L1203 400 1229 355 1256 290 1279 262M1383 460L1408 397" stroke="#3f8c50" stroke-width="10"/>
          </g>
          <path d="M62 729h3000" stroke="#000" stroke-width="2" stroke-dasharray="4 2"/><path d="M62 732h3000" stroke="#078007" stroke-width="4" stroke-dasharray="8 4"/>
          <path d="M752 627h22v68h-9l-2 3-2-3h-9zM845 627h22v68h-9l-2 3-2-3h-9z" fill="#ff1e1e" fill-opacity=".75"/>
          <path d="M208 773h88v67h-88z" fill="#008000" fill-opacity=".65"/>
          <g class="tag dim">
            <text x="762" y="638">S</text><text x="762" y="651">E</text><text x="762" y="664">L</text><text x="764" y="678">L</text><text x="763" y="691">Nn</text>
            <text x="855" y="638">S</text><text x="855" y="651">E</text><text x="855" y="664">L</text><text x="857" y="678">L</text><text x="856" y="691">Nn</text>
            <text x="251" y="784">PREPARE TO</text><text x="252" y="797">B</text><text x="251" y="810">u</text><text x="250" y="823">y</text><text x="252" y="836">N</text>
          </g>

          <path d="M950 196.500h827M1733.500 97v764" stroke="#85888f" stroke-dasharray="6 6" fill="none"/>
          <path d="M62 569.500h3000M62 603.500h3000M62 861.500h3000M133.500 861v4M235.500 861v4M388.500 861v4M490.500 861v4M592.500 861v4M695.500 861v4M797.500 861v4M899.500 861v4M1002.500 861v4M1104.500 861v4M1206.500 861v4M1308.500 861v4M1410.500 861v4M1512.500 861v4M1614.500 861v4M1717.500 861v4" stroke="#4f5256"/>
          <g class="axis mid">
            <text x="132" y="882">23:00</text><text x="235" y="882" font-weight="bold">28</text><text x="387" y="882">03:00</text><text x="490" y="882">04:00</text><text x="592" y="882">05:00</text><text x="694" y="882">06:00</text><text x="796" y="882">07:00</text><text x="1205" y="882">11:00</text><text x="1308" y="882">12:00</text><text x="1410" y="882">13:00</text><text x="1512" y="882">14:00</text><text x="1614" y="882">15:00</text>
          </g>
          <rect x="1678" y="863" width="109" height="24" fill="#4c525e"/><path d="M1733.500 863v4" stroke="#fff"/>
          <g class="axis light"><text x="1685" y="880">28 Feb '19</text><text x="1751" y="880">16:10</text></g>
        </g></svg>

        <div class="legend main"><svg width="14" height="14" fill="none" stroke="#777b85"><rect x=".5" y=".5" width="13" height="13" rx="2"/><path d="M3.500 7h7"/></svg><svg width="12" height="14"><path d="M0 0h12L8 7l4 7H0z" fill="#c3c6d0"/></svg><span class="name">U.S. Dollar Currency Index, 5, TVC</span><svg class="lc" width="10" height="6"><use href="#chev"/></svg><span class="ohlc"><span>O<i>96.08</i></span><span>H<i>96.10</i></span><span>L<i>96.07</i></span><span>C<i>96.10</i></span><span><i>+0.03 (+0.03%)</i></span></span></div>
        <div class="legend s1"><span>SFv5</span><svg class="lc" width="10" height="6"><use href="#chev"/></svg><div class="mini"><button aria-label="Hide"><svg><use href="#m-eye"/></svg></button><button aria-label="Format"><svg><use href="#m-gear"/></svg></button><button aria-label="Source"><svg><use href="#m-code"/></svg></button><button aria-label="Add"><svg><use href="#m-plus"/></svg></button><button aria-label="Remove"><svg><use href="#m-x"/></svg></button></div></div>
        <div class="legend s2"><span>SamFUckerVol</span><svg class="lc" width="10" height="6"><use href="#chev"/></svg><div class="mini"><button aria-label="Hide"><svg><use href="#m-eye"/></svg></button><button aria-label="Format"><svg><use href="#m-gear"/></svg></button><button aria-label="Source"><svg><use href="#m-code"/></svg></button><button aria-label="Add"><svg><use href="#m-plus"/></svg></button><button aria-label="Remove"><svg><use href="#m-x"/></svg></button></div></div>
        <div class="legend s3"><span>SrSlv170</span><svg class="lc" width="10" height="6"><use href="#chev"/></svg><div class="mini"><button aria-label="Hide"><svg><use href="#m-eye"/></svg></button><button aria-label="Format"><svg><use href="#m-gear"/></svg></button><button aria-label="Source"><svg><use href="#m-code"/></svg></button><button aria-label="Add"><svg><use href="#m-plus"/></svg></button><button aria-label="Remove"><svg><use href="#m-x"/></svg></button></div></div>

        <svg class="warn" width="17" height="17" fill="none" stroke="#f0884a" stroke-width="1.300"><circle cx="8.500" cy="8.500" r="7.700"/><path d="M8.500 4v6M8.500 11.500v2"/></svg>
        <svg class="panebtn" width="35" height="16"><rect width="16" height="16" rx="2" fill="#c3c6ce"/><path d="M3 5h10l-5 5z" fill="#fff"/><rect x="19" width="15" height="16" rx="2" fill="#c3c6ce"/><path d="M22 7l4.500-5L31 7zM22 9h9l-4.500 5z" fill="#fff"/></svg>
        <div class="order pos"><span class="pl">1 665.00</span><button class="qty">666</button><button class="rev" aria-label="Reverse"><svg width="12" height="12" fill="none" stroke="#4094e8" stroke-width="1.300"><path d="M3 12V1M1 3l2-2 2 2M9 0v11M7 9l2 2 2-2"/></svg></button><button class="x" aria-label="Close position"><svg width="11" height="11"><use href="#cross"/></svg></button></div>
        <div class="order lim"><span class="grip"></span><span class="kind">BUY LIMIT</span><button class="qty">1 000</button><button class="x" aria-label="Cancel order"><svg width="11" height="11"><use href="#cross"/></svg></button></div>
        <svg class="addline" width="18" height="19"><rect width="17" height="19" fill="#4c525e"/><path d="M9 4v12M3 10h12" stroke="#e8eaf0"/></svg>
      </div>

      <div class="scale"><svg class="canvas"><g transform="translate(-1796 -97)">
        <path d="M1796.500 97v793M1796 105.500h4M1796 137.500h4M1796 169.500h4M1796 234.500h4M1796 266.500h4M1796 362.500h4M1796 394.500h4M1796 426.500h4M1796 458.500h4M1796 490.500h4M1796 522.500h4M1796 554.500h4M1796 601.500h4M1796 634.500h4M1796 671.500h4M1796 710.500h4M1796 748.500h4M1796 786.500h4M1796 824.500h4M1796 569.500h68M1796 603.500h68M1796 861.500h68" stroke="#4f5256" fill="none"/>
        <g class="axis">
          <text x="1805" y="110">96.22</text><text x="1805" y="142">96.20</text><text x="1805" y="174">96.18</text><text x="1805" y="239">96.14</text><text x="1805" y="271">96.12</text><text x="1805" y="367">96.06</text><text x="1805" y="399">96.04</text><text x="1805" y="431">96.02</text><text x="1805" y="463">96.00</text><text x="1805" y="495">95.98</text><text x="1805" y="527">95.96</text><text x="1805" y="559">95.94</text>
          <svg x="1796" y="590" width="60" height="13"><text x="9" y="16">0</text></svg>
          <text x="1805" y="639">100.0000</text><text x="1805" y="676">80.0000</text><text x="1805" y="715">60.0000</text><text x="1805" y="753">40.0000</text><text x="1805" y="791">20.0000</text><text x="1805" y="829">0.0000</text>
        </g>
        <path d="M1796 187h48v19h-48z" fill="#4c525e"/><path d="M1796 285h48v19h-48zM1801 306h43v18h-43z"/><path d="M1796 325h48v19h-48zM1796 368h48v19h-48z" fill="#3f93ea"/>
        <path d="M1796 196.500h4M1796 294.500h4M1796 334.500h4M1796 377.500h4" stroke="#fff"/>
        <g class="axis light"><text x="1805" y="200">96.16</text><text x="1805" y="299">96.10</text><text x="1805" y="319">03:16</text><text x="1805" y="339">96.08</text><text x="1805" y="382">96.05</text></g>
        <g fill="none" stroke="#131722" stroke-width="1.200"><circle cx="1828" cy="875.500" r="5"/><path d="M1828 868v2.500M1828 880.500v2.500M1820.500 875.500h2.500M1833 875.500h2.500M1822.500 870l2 2M1831.500 879l2 2M1833.500 870l-2 2M1824.500 879l-2 2"/></g>
      </g></svg></div>

      <div class="ticket"><span class="dots"></span><button class="sell"><b>SELL</b>96.10</button><span class="spread">0.00</span><button class="buybtn"><b>BUY</b>96.10</button><input aria-label="Quantity" value="1K"><div class="step"><button aria-label="More"><svg width="10" height="10"><path d="M5 0v10M0 5h10" stroke="#333" stroke-width="1.500"/></svg></button><button aria-label="Less"><svg width="10" height="10"><path d="M0 5h10" stroke="#333" stroke-width="1.500"/></svg></button></div></div>
    </div>

    <div class="ranges">
      <button>1D</button><button>5D</button><button>1M</button><button>3M</button><button>6M</button><button>YTD</button><button>1Y</button><button>5Y</button><button>All</button><span class="vr"></span><button>Go to...</button>
      <span class="grow"></span><button>08:31:44 (UTC+1)</button><span class="vr"></span><button>%</button><button>log</button><button>auto</button>
    </div>
    <div class="tabs">
      <button>Stock Screener<svg class="dn" width="10" height="6"><use href="#chev"/></svg></button><button>Text Notes</button><button>Pine Editor</button><button>Strategy Tester</button><button>Paper Trading<i class="live"></i></button>
      <span class="grow"></span>
      <svg width="60" height="20" fill="none" stroke="#131722" stroke-width="1.300"><path d="M1 13l9-8 9 8"/><rect x="40.500" y="1.500" width="19" height="17" rx="2"/><path d="M41 4.500h18" stroke="#777" stroke-width="2"/></svg>
    </div>
  </main>

  <aside class="sidebar">
    <button aria-label="Watchlist"><svg viewBox="-14 -14 28 28"><rect x="-12" y="-12" width="25" height="25" rx="5"/><path d="M-8-7H9M-8-3H9M-8 1H9M-8 5H9M-8 8H9"/></svg></button>
    <button aria-label="Alerts"><svg viewBox="-14 -14 28 28"><circle cy="2" r="11"/><path d="M0-6v9h-6M-12-5a5 5 0 0 1 7-7M12-5a5 5 0 0 0-7-7M-7 11l-2 3M7 11l2 3"/></svg></button>
    <button aria-label="Data window"><svg viewBox="-14 -14 28 28"><path d="M1-12h8q3 0 3 3v18q0 3-3 3H-10q-3 0-3-3V-6M-13-18v5M-19-12h5M-11-12h6M-13-10v3M-8 1H3M-8 6H3M6 1h2M6 6h2"/><rect x="-9" y="-7" width="16" height="3" rx="1.500"/></svg></button>
    <button aria-label="Hotlist"><svg viewBox="-14 -14 28 28"><path d="M1-13q-7 5-10 9a11 11 0 1 0 18-1q-1-2-2-3-1 5-6 6 1-6 0-11z"/></svg></button>
    <button aria-label="Calendar"><svg viewBox="-14 -14 28 28"><rect x="-12" y="-11" width="25" height="25" rx="4"/><path d="M-6-14v5M6-14v5"/><circle cx="-6" cy="-4" r="1.800"/><circle cy="-4" r="1.800"/><circle cx="7" cy="-4" r="1.800"/><circle cx="-6" cy="3" r="1.800"/><circle cy="3" r="1.800"/><circle cx="7" cy="3" r="1.800"/><circle cx="-6" cy="9" r="1.800"/><circle cy="9" r="1.800"/></svg></button>
    <button aria-label="My ideas"><svg viewBox="-14 -14 28 28"><path d="M-5 8Q-6 5-8 2a10 10 0 1 1 16 0Q6 5 5 8zM-5 11H5M-3 14h5M0 8V-3M-3-3h6M-5 8v3M5 8v3"/></svg></button>
    <hr>
    <button aria-label="Public chats"><svg viewBox="-14 -14 28 28"><path d="M-13 13V-4q0-3 3-3H4q3 0 3 3v6q0 4-4 4H-8zM-4-7v-3q0-4 4-4h9q4 0 4 4v5q0 4-5 4M-2 6l2 4h7l6 5V0H9"/></svg></button>
    <button aria-label="Private chats"><svg viewBox="-14 -14 28 28"><path d="M-12 10v-19q0-4 4-4H5q4 0 4 4V0q0 4-4 4H-6zM-2 4l2 4h7l6 5V-6H9"/></svg></button>
    <button aria-label="Ideas stream"><svg viewBox="-14 -14 28 28"><path d="M-5 8Q-6 5-8 2a10 10 0 1 1 16 0Q6 5 5 8zM-5 11H5M-3 14h5M0 8V-3M-5 8v3M5 8v3M-11-8q-3 6 0 13M-15-10q-3 8 0 17M11-8q3 6 0 13M15-10q3 8 0 17"/></svg><span class="badge">110</span></button>
    <button aria-label="Notifications"><svg viewBox="-14 -14 28 28"><path d="M-8 6V-3q0-6 6-8 2-3 4 0 6 2 6 8v9M-9 6H9q2 0 2 2t-2 1H-9q-2 0-2-1t2-2zM-4 10q4 5 8 0"/></svg></button>
    <hr>
    <button aria-label="Order panel"><svg viewBox="-14 -14 28 28"><path d="M-14 12q-3-2-1-4L-5-2 6 8q1 3-2 3L-5 3l-8 8zM-1-8q1-3 4-1l6 6 8-7q3 0 1 3L9 4z"/></svg></button>
    <button aria-label="Depth of market"><svg viewBox="-14 -14 28 28"><rect x="-11" y="1" width="7" height="4" rx="2"/><rect x="-11" y="7" width="7" height="4" rx="2"/><rect x="6" y="-12" width="7" height="4" rx="2"/><rect x="6" y="-6" width="7" height="4" rx="2"/><circle cx="1" cy="-10" r="1.700"/><circle cx="1" cy="-4" r="1.700"/><circle cx="1" cy="3" r="1.700"/><circle cx="1" cy="9" r="1.700"/></svg></button>
    <button class="help" aria-label="Help"><svg viewBox="-14 -14 28 28"><circle r="13"/><path d="M-5-4a5 5 0 1 1 7 4q-2 1-2 3"/><circle cy="7" r="2"/></svg></button>
  </aside>
</div>
</body>
</html>
```
FILE: styles.css
```css
* { box-sizing: border-box; }
body { margin: 0; min-height: 100vh; display: flex; flex-direction: column; font: 15px "Liberation Sans", Arial, sans-serif; color: #131722; background: #e0e3eb; overflow: hidden; }
button { font: inherit; color: inherit; background: none; border: 0; padding: 0; margin: 0; cursor: pointer; white-space: nowrap; display: flex; align-items: center; }
svg { display: block; flex: none; }
.defs { position: absolute; width: 0; height: 0; }
.grow { flex: 1; }

/* browser frame */
.browser { position: relative; flex: none; background: #eeeff1; border-bottom: 1px solid #a3a5a7; font-family: "Noto Sans", sans-serif; overflow: hidden; }
.navbar { display: flex; height: 24px; background: #f2f3f3; }
.omnibox { flex: 1; display: flex; align-items: center; height: 24px; padding: 0 4px 4px 9px; background: #fff; border: 1px solid #a3a5a7; border-top: 0; border-radius: 0 0 0 3px; font-size: 14px; line-height: 19px; }
.secure { margin: 0 9px; padding-right: 10px; border-right: 1px solid #b5b5b5; color: #188a42; }
.url { color: #80868b; }
.url b { font-weight: 400; color: #202124; }
.url .scheme { color: #188a42; }
.bookmarks { display: flex; align-items: center; gap: 13px; height: 29px; padding-left: 11px; font-size: 13px; white-space: nowrap; }
.bookmarks a { display: flex; align-items: center; gap: 8px; color: #222; text-decoration: none; }
.more { margin-left: auto; padding-right: 12px; color: #888; }
.toast { position: absolute; top: 0; right: 20px; width: 474px; height: 51px; padding: 18px 0 0 59px; background: rgba(240, 241, 242, .87); border: 1px solid #8e9092; border-top: 0; border-radius: 0 0 3px 3px; box-shadow: 0 1px 3px #777; font-size: 16px; line-height: 26px; font-weight: 700; white-space: nowrap; color: #303234; }
.bubble { position: absolute; left: 11px; top: 0; }
.close { position: absolute; right: 9px; top: 0; }

/* frame */
.app { flex: 1; display: flex; min-height: 0; }
.drawbar, .sidebar { flex: none; display: flex; flex-direction: column; background: #fff; position: relative; }
.drawbar { width: 57px; margin-right: 5px; }
.sidebar { width: 50px; margin-left: 6px; }
.drawbar svg, .topbar svg, .sidebar svg { fill: none; overflow: visible; }
.drawbar svg, .sidebar svg { width: 28px; height: 28px; }
.drawbar svg:not([stroke]), .topbar svg:not([stroke]), .sidebar svg:not([stroke]) { stroke: #131722; }
.drawbar svg:not([stroke-width]), .topbar svg, .sidebar svg { stroke-width: 1.300; }
.drawbar button { height: 40px; flex: none; justify-content: center; }
.drawbar hr, .sidebar hr { width: 100%; height: 1px; border: 0; background: #dcdee3; margin: 6px 0 5px; flex: none; }
.sidebar hr { margin: 7px 0; }
.logo { position: relative; height: 54px; padding: 10px 12px; margin-bottom: 6px; border-bottom: 1px solid #e0e3eb; }
.avatar { display: block; width: 33px; height: 33px; border-radius: 2px; background: #6b9e63; color: #fff; font-size: 26px; line-height: 33px; text-align: center; }
.badge { position: absolute; background: #fb4e67; color: #fff; border-radius: 9px; font-size: 13px; line-height: 17px; text-align: center; }
.logo .badge { left: 35px; top: 6px; width: 16px; height: 16px; font-size: 12px; line-height: 16px; }
.bar-end { margin-top: auto; padding-bottom: 23px; }
.bar-end button { width: 100%; }
.drawbar .handle { position: absolute; right: -3px; bottom: 65px; width: 9px; height: 28px; border: 1px solid #d5d8e0; border-radius: 4px 0 0 4px; background: #fff; color: #8a8e98; font-size: 12px; }
.sidebar button { position: relative; height: 56px; flex: none; justify-content: center; }
.sidebar .badge { left: 17px; top: 8px; width: 29px; height: 17px; }
.sidebar .help { margin-top: auto; }

.center { flex: 1; display: flex; flex-direction: column; min-width: 0; }
.topbar { flex: none; display: flex; height: 43px; background: #fff; border-bottom: 1px solid #e0e3eb; white-space: nowrap; }
.topbar > button, .topbar > div { border-right: 1px solid #e0e3eb; padding-bottom: 1px; }
.topbar .symbol { width: 111px; padding-left: 13px; font-weight: 700; color: #40434c; }
.topbar .times { display: flex; gap: 13px; width: 220px; padding: 0 0 1px 8px; }
.times .on { color: #2d8fe8; }
.sq { width: 43px; justify-content: center; }
.sq svg { width: 28px; height: 28px; }
.topbar .wide { gap: 7px; padding: 0 9px 1px; }
.wide svg { width: 22px; height: 22px; }
.topbar .undo { display: flex; gap: 9px; padding: 0 10px 1px 8px; }
.undo svg { width: 22px; height: 22px; }
.topbar .lead { border-left: 1px solid #e0e3eb; width: 44px; }
.topbar .view { gap: 4px; padding: 0 6px 1px; }
.view svg { width: 28px; height: 28px; }
.view svg.dn { width: 10px; height: 6px; margin: 0 0 0 7px; }
.topbar .publish { width: 91px; justify-content: center; background: #2196f3; color: #fff; font-size: 17px; border-color: #8ac8f8; }
.topbar .play { width: 42px; justify-content: center; background: #2196f3; border: 0; }
.play svg { width: 28px; height: 28px; }

/* chart */
.chart { flex: 1; display: flex; position: relative; min-height: 0; background: #fff; border-bottom: 1px solid #e0e3eb; }
.plot { flex: 1; display: grid; position: relative; min-width: 0; }
.scale { flex: none; width: 68px; display: grid; }
.canvas { width: 100%; height: 100%; overflow: hidden; }
.grid { fill: none; stroke: #e3edf3; }
.axis { font-size: 12px; fill: #55585f; }
.mid, .tag, .buy { text-anchor: middle; }
.light { fill: #f2f4f8; }
.tag { font-size: 13px; fill: #200; }
.dim { fill-opacity: .75; }
.buy { font-size: 13px; fill: #2a7f2a; fill-opacity: .75; }
.legend { position: absolute; left: 13px; display: flex; align-items: center; height: 20px; color: #50535b; white-space: nowrap; }
.legend .lc { margin-left: 4px; color: #333; }
.legend.main { top: 9px; height: 22px; font-size: 19px; }
.legend.main .name { margin-left: 6px; }
.legend.main svg + svg { margin-left: 11px; }
.ohlc { display: flex; gap: 13px; margin-left: 33px; }
.ohlc i { font-style: normal; color: #53b987; }
.s1 { top: 37px; }
.s2 { top: 481px; }
.s3 { top: 514px; }
.mini { display: flex; gap: 4px; margin-left: 11px; }
.mini svg { width: 15px; height: 15px; }
.warn { position: absolute; right: 7px; top: 10px; }
.panebtn { position: absolute; right: 14px; top: 41px; }
.addline { position: absolute; right: 1px; top: 90px; }
.order { position: absolute; right: 86px; display: flex; height: 24px; border: 1px solid #4094e8; background: rgba(255, 255, 255, .85); font: bold 11px "Liberation Serif", serif; color: #4094e8; }
.order > * { display: flex; align-items: center; justify-content: center; }
.order .qty { background: #3f93ea; color: #fff; width: 28px; }
.order .x { width: 22px; border-left: 1px solid #4094e8; }
.pos { top: 225px; }
.pos .pl { width: 47px; color: #1a8a12; }
.pos .rev { width: 22px; }
.lim { top: 268px; }
.order.lim .qty { width: 35px; }
.lim .kind { width: 70px; }
.lim .grip { width: 2px; margin: 4px 3px; border: 1px dotted #8ab8ec; border-width: 0 1px; }
.ticket { position: absolute; left: 798px; bottom: -19px; z-index: 2; display: flex; height: 44px; background: #fff; border: 1px solid #d9dce3; box-shadow: 0 2px 3px rgba(0, 0, 0, .25); }
.dots { width: 10px; margin: 14px 3px; background: radial-gradient(circle, #c4c7cf 1px, transparent 1px) 0 0 / 5px 5px; }
.sell, .buybtn { width: 111px; padding: 0 0 2px 8px; flex-direction: column; align-items: flex-start; justify-content: center; line-height: 16px; color: #40434c; }
.sell { background: #fdf0f2; border-left: 1px solid #e0e3eb; }
.buybtn { background: #edf7fe; }
.sell b { color: #e8505f; font-size: 14px; }
.buybtn b { color: #2d8fe0; font-size: 14px; }
.spread { width: 52px; line-height: 41px; text-align: center; color: #8a8e98; border: 1px solid #e0e3eb; border-width: 0 1px; }
.ticket input { width: 35px; border: 1px solid #e0e3eb; border-width: 0 1px; padding: 0 0 2px; text-align: center; font: inherit; color: #333; }
.step { display: grid; width: 20px; }
.step button { justify-content: center; }
.step button + button { border-top: 1px solid #e0e3eb; }

.ranges { flex: none; display: flex; align-items: center; gap: 15px; height: 42px; padding: 0 12px 2px 17px; background: #fff; border-radius: 0 0 4px 4px; }
.vr { width: 1px; height: 24px; background: #dcdee3; margin: 0 2px; }
.tabs { flex: none; display: flex; align-items: stretch; height: 43px; margin-top: 4px; padding-right: 17px; background: #fff; border-bottom: 1px solid #e0e3eb; border-radius: 4px 4px 0 0; }
.tabs button { padding: 0 17px 3px; border-right: 1px solid #e0e3eb; }
.tabs button:first-child { padding: 0 5px 3px 17px; }
.tabs > svg { align-self: center; }
.tabs .dn { margin-left: 10px; }
.live { width: 7px; height: 7px; border-radius: 50%; background: #5fb860; margin-left: 4px; }
```
